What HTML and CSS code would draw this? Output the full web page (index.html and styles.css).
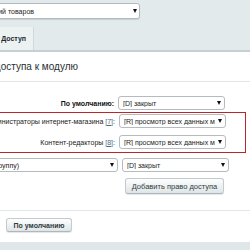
FILE: index.html
```html
<!DOCTYPE html>
<html lang="ru">
<head>
  <meta charset="UTF-8" />
  <title>Доступ к модулю</title>
  <link rel="stylesheet" href="styles.css">
</head>
<body>
  <div class="top">
    <div class="select select-top">
      <span class="val-end top-val"><span>Торговый каталог: экспорт позиций товаров</span></span>
      <span class="arrow"></span>
    </div>
  </div>

  <div class="tabs">
    <div class="tab">Доступ</div>
  </div>

  <div class="content">
    <h2 class="title"><span>Уровень доступа к модулю</span></h2>

    <div class="form">
      <div class="row row-default">
        <div class="label bold"><span>По умолчанию:</span></div>
        <div class="select"><span class="val">[D] закрыт</span><span class="arrow"></span></div>
      </div>

      <div class="marked">
        <div class="row">
          <div class="label"><span>Администраторы интернет-магазина <a href="#">[7]</a>:</span></div>
          <div class="select"><span class="val">[R] просмотр всех данных модуля</span><span class="arrow"></span></div>
        </div>
        <div class="row">
          <div class="label"><span>Контент-редакторы <a href="#">[8]</a>:</span></div>
          <div class="select"><span class="val">[R] просмотр всех данных модуля</span><span class="arrow"></span></div>
        </div>
      </div>

      <div class="row row-new">
        <div class="select select-group">
          <span class="val-end group-val"><span>(выберите группу)</span></span>
          <span class="arrow"></span>
        </div>
        <div class="select"><span class="val">[D] закрыт</span><span class="arrow"></span></div>
      </div>

      <div class="row row-add">
        <button class="btn btn-add">Добавить право доступа</button>
      </div>
    </div>

    <div class="footer">
      <button class="btn btn-default">По умолчанию</button>
    </div>
  </div>

  <div class="bottom"></div>
</body>
</html>
```

FILE: styles.css
```css
body {
  margin: 0;
  width: 250px;
  height: 250px;
  overflow: hidden;
  font-family: "Liberation Sans", Arial, sans-serif;
  font-size: 7px;
  color: #222;
  background: #fff;
}

.top {
  background: #e3eaec;
  height: 27px;
  padding-top: 3px;
  box-sizing: border-box;
}

.select {
  display: flex;
  align-items: center;
  box-sizing: border-box;
  width: 107px;
  height: 14px;
  padding: 0 3px 0 4px;
  background: #fff;
  border: 1px solid #b4bcbf;
  border-radius: 3px;
  white-space: nowrap;
  overflow: hidden;
}

.select .val {
  flex: 1;
  overflow: hidden;
  color: #1c1c1c;
}

.val-end {
  display: flex;
  justify-content: flex-end;
  flex-shrink: 0;
  white-space: nowrap;
}

.arrow {
  margin-left: 3px;
  flex-shrink: 0;
  width: 0;
  height: 0;
  border-left: 2.5px solid transparent;
  border-right: 2.5px solid transparent;
  border-top: 4px solid #111;
}

.select-group .arrow,
.select-top .arrow {
  margin-left: auto;
}

.select-top {
  margin-left: -10px;
  width: 150px;
  height: 16px;
  padding-right: 2px;
  border-color: #b3bbbe;
  box-shadow: 0 1px 1px rgba(0, 0, 0, 0.12);
}

.top-val {
  width: 39px;
}

.tabs {
  background: #e3eaec;
  height: 25px;
  border-bottom: 2px solid #c6cfd2;
  box-sizing: border-box;
}

.tab {
  width: 34px;
  height: 23px;
  box-sizing: border-box;
  background: #ecf1f2;
  border-right: 1px solid #d2d9db;
  display: flex;
  align-items: center;
  justify-content: flex-end;
  padding-right: 7px;
  font-weight: bold;
  color: #1e2a2e;
}

.title {
  margin: 0;
  width: 78px;
  height: 29px;
  display: flex;
  align-items: center;
  justify-content: flex-end;
  white-space: nowrap;
  font-size: 10px;
  font-weight: normal;
  color: #2a2f31;
}

.title span {
  flex-shrink: 0;
}

.content {
  height: 190px;
}

.form {
  margin-left: -10px;
  padding-top: 14px;
  border-top: 1px solid #e1e6e8;
}

.row {
  display: flex;
  align-items: center;
  height: 14px;
}

.label {
  width: 128px;
  display: flex;
  justify-content: flex-end;
  padding-right: 4px;
  box-sizing: border-box;
  white-space: nowrap;
}

.label span {
  flex-shrink: 0;
}

.label a {
  color: #4d6b86;
}

.bold {
  font-weight: bold;
  color: #111;
}

.row-default {
  margin-bottom: 2px;
}

.marked {
  margin-left: -1px;
  width: 257px;
  box-sizing: border-box;
  border: 1px solid #b9262c;
  padding: 1px 0 3px 1px;
  display: flex;
  flex-direction: column;
  gap: 7px;
}

.row-new {
  margin-top: 5px;
  gap: 4px;
}

.select-group {
  width: 128px;
}

.group-val {
  width: 24px;
}

.row-add {
  margin-top: 6px;
  height: 16px;
  padding-left: 135px;
}

.btn {
  font-family: inherit;
  font-size: 7.5px;
  color: #2f3b40;
  background: linear-gradient(#fdfefe, #dfe5e7);
  border: 1px solid #c3cbce;
  border-bottom-color: #aeb7bb;
  border-radius: 3px;
  box-shadow: 0 1px 1px rgba(0, 0, 0, 0.1);
  padding: 0;
  height: 16px;
}

.btn-add {
  width: 99px;
}

.footer {
  margin-top: 16px;
  border-top: 1px solid #e1e6e8;
  padding: 7px 0 0 6px;
}

.btn-default {
  width: 66px;
  height: 14px;
  font-weight: bold;
  font-size: 7px;
}

.bottom {
  background: #e0e7e9;
  height: 8px;
}
```
